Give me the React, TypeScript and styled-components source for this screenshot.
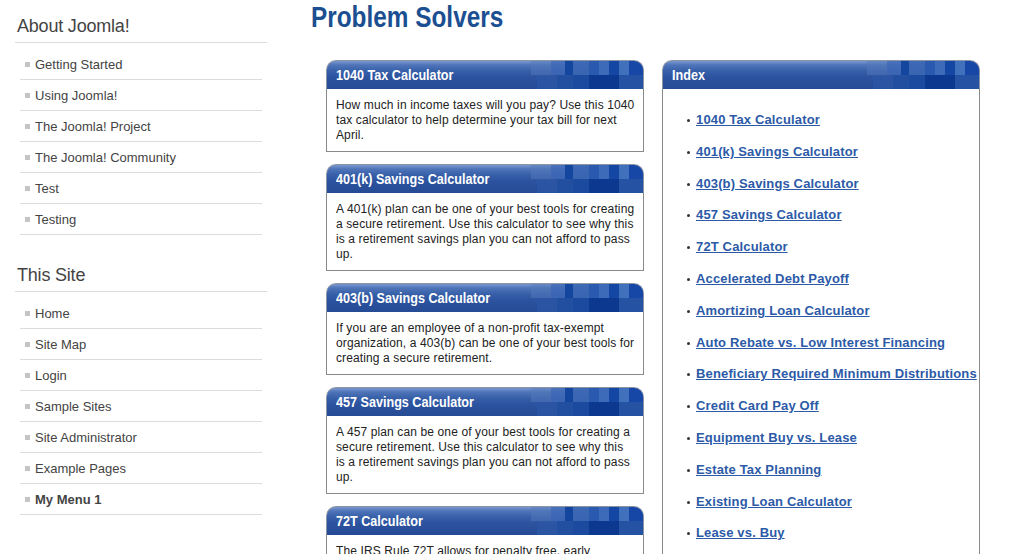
import React from "react";
import styled, { createGlobalStyle } from "styled-components";

const GlobalStyle = createGlobalStyle`
  html, body {
    margin: 0;
    padding: 0;
    background: #fff;
    font-family: "Liberation Sans", Arial, sans-serif;
  }
`;

const sideMenus = [
  {
    title: "About Joomla!",
    items: ["Getting Started", "Using Joomla!", "The Joomla! Project", "The Joomla! Community", "Test", "Testing"],
  },
  {
    title: "This Site",
    items: ["Home", "Site Map", "Login", "Sample Sites", "Site Administrator", "Example Pages", "My Menu 1"],
  },
];

const calculators = [
  {
    title: "1040 Tax Calculator",
    text: "How much in income taxes will you pay? Use this 1040 tax calculator to help determine your tax bill for next April.",
  },
  {
    title: "401(k) Savings Calculator",
    text: "A 401(k) plan can be one of your best tools for creating a secure retirement. Use this calculator to see why this is a retirement savings plan you can not afford to pass up.",
  },
  {
    title: "403(b) Savings Calculator",
    text: "If you are an employee of a non-profit tax-exempt organization, a 403(b) can be one of your best tools for creating a secure retirement.",
  },
  {
    title: "457 Savings Calculator",
    text: "A 457 plan can be one of your best tools for creating a secure retirement. Use this calculator to see why this is a retirement savings plan you can not afford to pass up.",
  },
  {
    title: "72T Calculator",
    text: "The IRS Rule 72T allows for penalty free, early withdrawals from your retirement accounts.",
  },
];

const indexLinks = [
  "1040 Tax Calculator",
  "401(k) Savings Calculator",
  "403(b) Savings Calculator",
  "457 Savings Calculator",
  "72T Calculator",
  "Accelerated Debt Payoff",
  "Amortizing Loan Calculator",
  "Auto Rebate vs. Low Interest Financing",
  "Beneficiary Required Minimum Distributions",
  "Credit Card Pay Off",
  "Equipment Buy vs. Lease",
  "Estate Tax Planning",
  "Existing Loan Calculator",
  "Lease vs. Buy",
  "Loan Payoff",
];

export default function App() {
  return (
    <>
      <GlobalStyle />
      <Page>
        <Sidebar>
          {sideMenus.map((m) => (
            <MenuBlock key={m.title}>
              <MenuTitle>{m.title}</MenuTitle>
              <MenuList>
                {m.items.map((it) => (
                  <MenuItem key={it} $active={it === "My Menu 1"}>
                    {it}
                  </MenuItem>
                ))}
              </MenuList>
            </MenuBlock>
          ))}
        </Sidebar>

        <Main>
          <PageTitle>
            <Condensed>Problem Solvers</Condensed>
          </PageTitle>
          <Columns>
            <CardColumn>
              {calculators.map((c) => (
                <Card key={c.title}>
                  <BoxHeader>
                    <Pixels />
                    <HeaderText>
                      <Condensed>{c.title}</Condensed>
                    </HeaderText>
                  </BoxHeader>
                  <CardBody>{c.text}</CardBody>
                </Card>
              ))}
            </CardColumn>

            <IndexBox>
              <BoxHeader>
                <Pixels />
                <HeaderText>
                  <Condensed>Index</Condensed>
                </HeaderText>
              </BoxHeader>
              <IndexBody>
                <IndexList>
                  {indexLinks.map((l) => (
                    <IndexItem key={l}>
                      <IndexLink href="#">{l}</IndexLink>
                    </IndexItem>
                  ))}
                </IndexList>
              </IndexBody>
            </IndexBox>
          </Columns>
        </Main>
      </Page>
    </>
  );
}

// blue squares at the right end of the box headers
function Pixels() {
  const top = [
    [0, 20, "#5479bb", 0.5],
    [20, 14, "#3e69b6", 0.8],
    [34, 8, "#1446a0", 1],
    [42, 16, "#3a66b3", 0.9],
    [58, 10, "#2a5aaf", 1],
    [68, 10, "#3e6bb9", 1],
    [78, 10, "#1446a3", 1],
    [88, 10, "#4170bc", 1],
    [98, 14, "#1646a6", 1],
  ] as const;
  const bottom = [
    [6, 20, "#2c57a6", 0.7],
    [26, 16, "#234fa0", 1],
    [42, 16, "#1c4a9f", 1],
    [58, 30, "#0c3890", 1],
    [88, 24, "#2652a3", 1],
  ] as const;
  return (
    <PixelSvg width="112" height="29" viewBox="0 0 112 29">
      {top.map(([x, w, c, o], i) => (
        <rect key={"t" + i} x={x} y={1} width={w} height={14} fill={c} opacity={o} />
      ))}
      {bottom.map(([x, w, c, o], i) => (
        <rect key={"b" + i} x={x} y={15} width={w} height={14} fill={c} opacity={o} />
      ))}
    </PixelSvg>
  );
}

const Page = styled.div`
  display: flex;
  align-items: flex-start;
  padding-left: 15px;
  height: 554px;
  overflow: hidden;
`;

const Sidebar = styled.div`
  flex: none;
  width: 252px;
  padding-top: 15px;
`;

const MenuBlock = styled.div`
  & + & {
    margin-top: 29px;
  }
`;

const MenuTitle = styled.h3`
  margin: 0;
  padding: 0 0 5px 2px;
  font-size: 18px;
  line-height: 22px;
  font-weight: normal;
  letter-spacing: -0.2px;
  color: #444;
  border-bottom: 1px solid #dcdcdc;
`;

const MenuList = styled.ul`
  list-style: none;
  margin: 0;
  padding: 6px 5px 0;
`;

const MenuItem = styled.li<{ $active?: boolean }>`
  display: flex;
  align-items: center;
  height: 30px;
  border-bottom: 1px solid #dcdcdc;
  padding-left: 15px;
  font-size: 13px;
  color: #444;
  font-weight: ${(p) => (p.$active ? "bold" : "normal")};
  position: relative;

  &::before {
    content: "";
    position: absolute;
    left: 5px;
    top: 13px;
    width: 5px;
    height: 5px;
    background: #c4c4c4;
  }
`;

const Main = styled.div`
  flex: 1;
  margin-left: 44px;
`;

// narrow face stand-in: no condensed family is installed
const Condensed = styled.span`
  display: inline-block;
  transform: scaleX(0.84);
  transform-origin: left center;
  white-space: nowrap;
`;

const PageTitle = styled.h1`
  margin: 0;
  font-size: 29px;
  line-height: 34px;
  font-weight: bold;
  color: #1b4f91;
`;

const Columns = styled.div`
  display: flex;
  align-items: flex-start;
  gap: 18px;
  padding: 26px 0 0 15px;
`;

const CardColumn = styled.div`
  display: flex;
  flex-direction: column;
  gap: 12px;
  width: 318px;
`;

const Card = styled.div`
  width: 318px;
`;

const BoxHeader = styled.div`
  position: relative;
  height: 29px;
  box-sizing: border-box;
  border: 1px solid #8c93a3;
  border-bottom: none;
  border-radius: 10px 10px 0 0;
  overflow: hidden;
  background: linear-gradient(
    to bottom,
    #7a98d0 0px,
    #4f74b8 4px,
    #3760a9 10px,
    #2c539f 16px,
    #264b95 28px
  );
`;

const PixelSvg = styled.svg`
  position: absolute;
  right: 0;
  top: -1px;
  display: block;
`;

const HeaderText = styled.div`
  position: relative;
  padding-left: 9px;
  line-height: 28px;
  font-size: 15px;
  font-weight: bold;
  color: #fff;
`;

const CardBody = styled.div`
  border: 1px solid #8a8a8a;
  border-top: none;
  padding: 9px 8px 8px 9px;
  font-size: 12px;
  line-height: 15px;
  letter-spacing: 0.12px;
  color: #222;
`;

const IndexBox = styled.div`
  width: 318px;
`;

const IndexBody = styled.div`
  border: 1px solid #8a8a8a;
  border-top: none;
  min-height: 500px;
`;

const IndexList = styled.ul`
  list-style: none;
  margin: 0;
  padding: 15px 0 0 33px;
  font-size: 13px;
`;

const IndexItem = styled.li`
  position: relative;
  line-height: 31.8px;

  &::before {
    content: "";
    position: absolute;
    left: -9px;
    top: 15px;
    width: 3px;
    height: 3px;
    border-radius: 50%;
    background: #333;
  }
`;

const IndexLink = styled.a`
  font-size: 13px;
  font-weight: bold;
  letter-spacing: 0.15px;
  color: #2c5aa7;
  text-decoration: underline;
  white-space: nowrap;
`;
